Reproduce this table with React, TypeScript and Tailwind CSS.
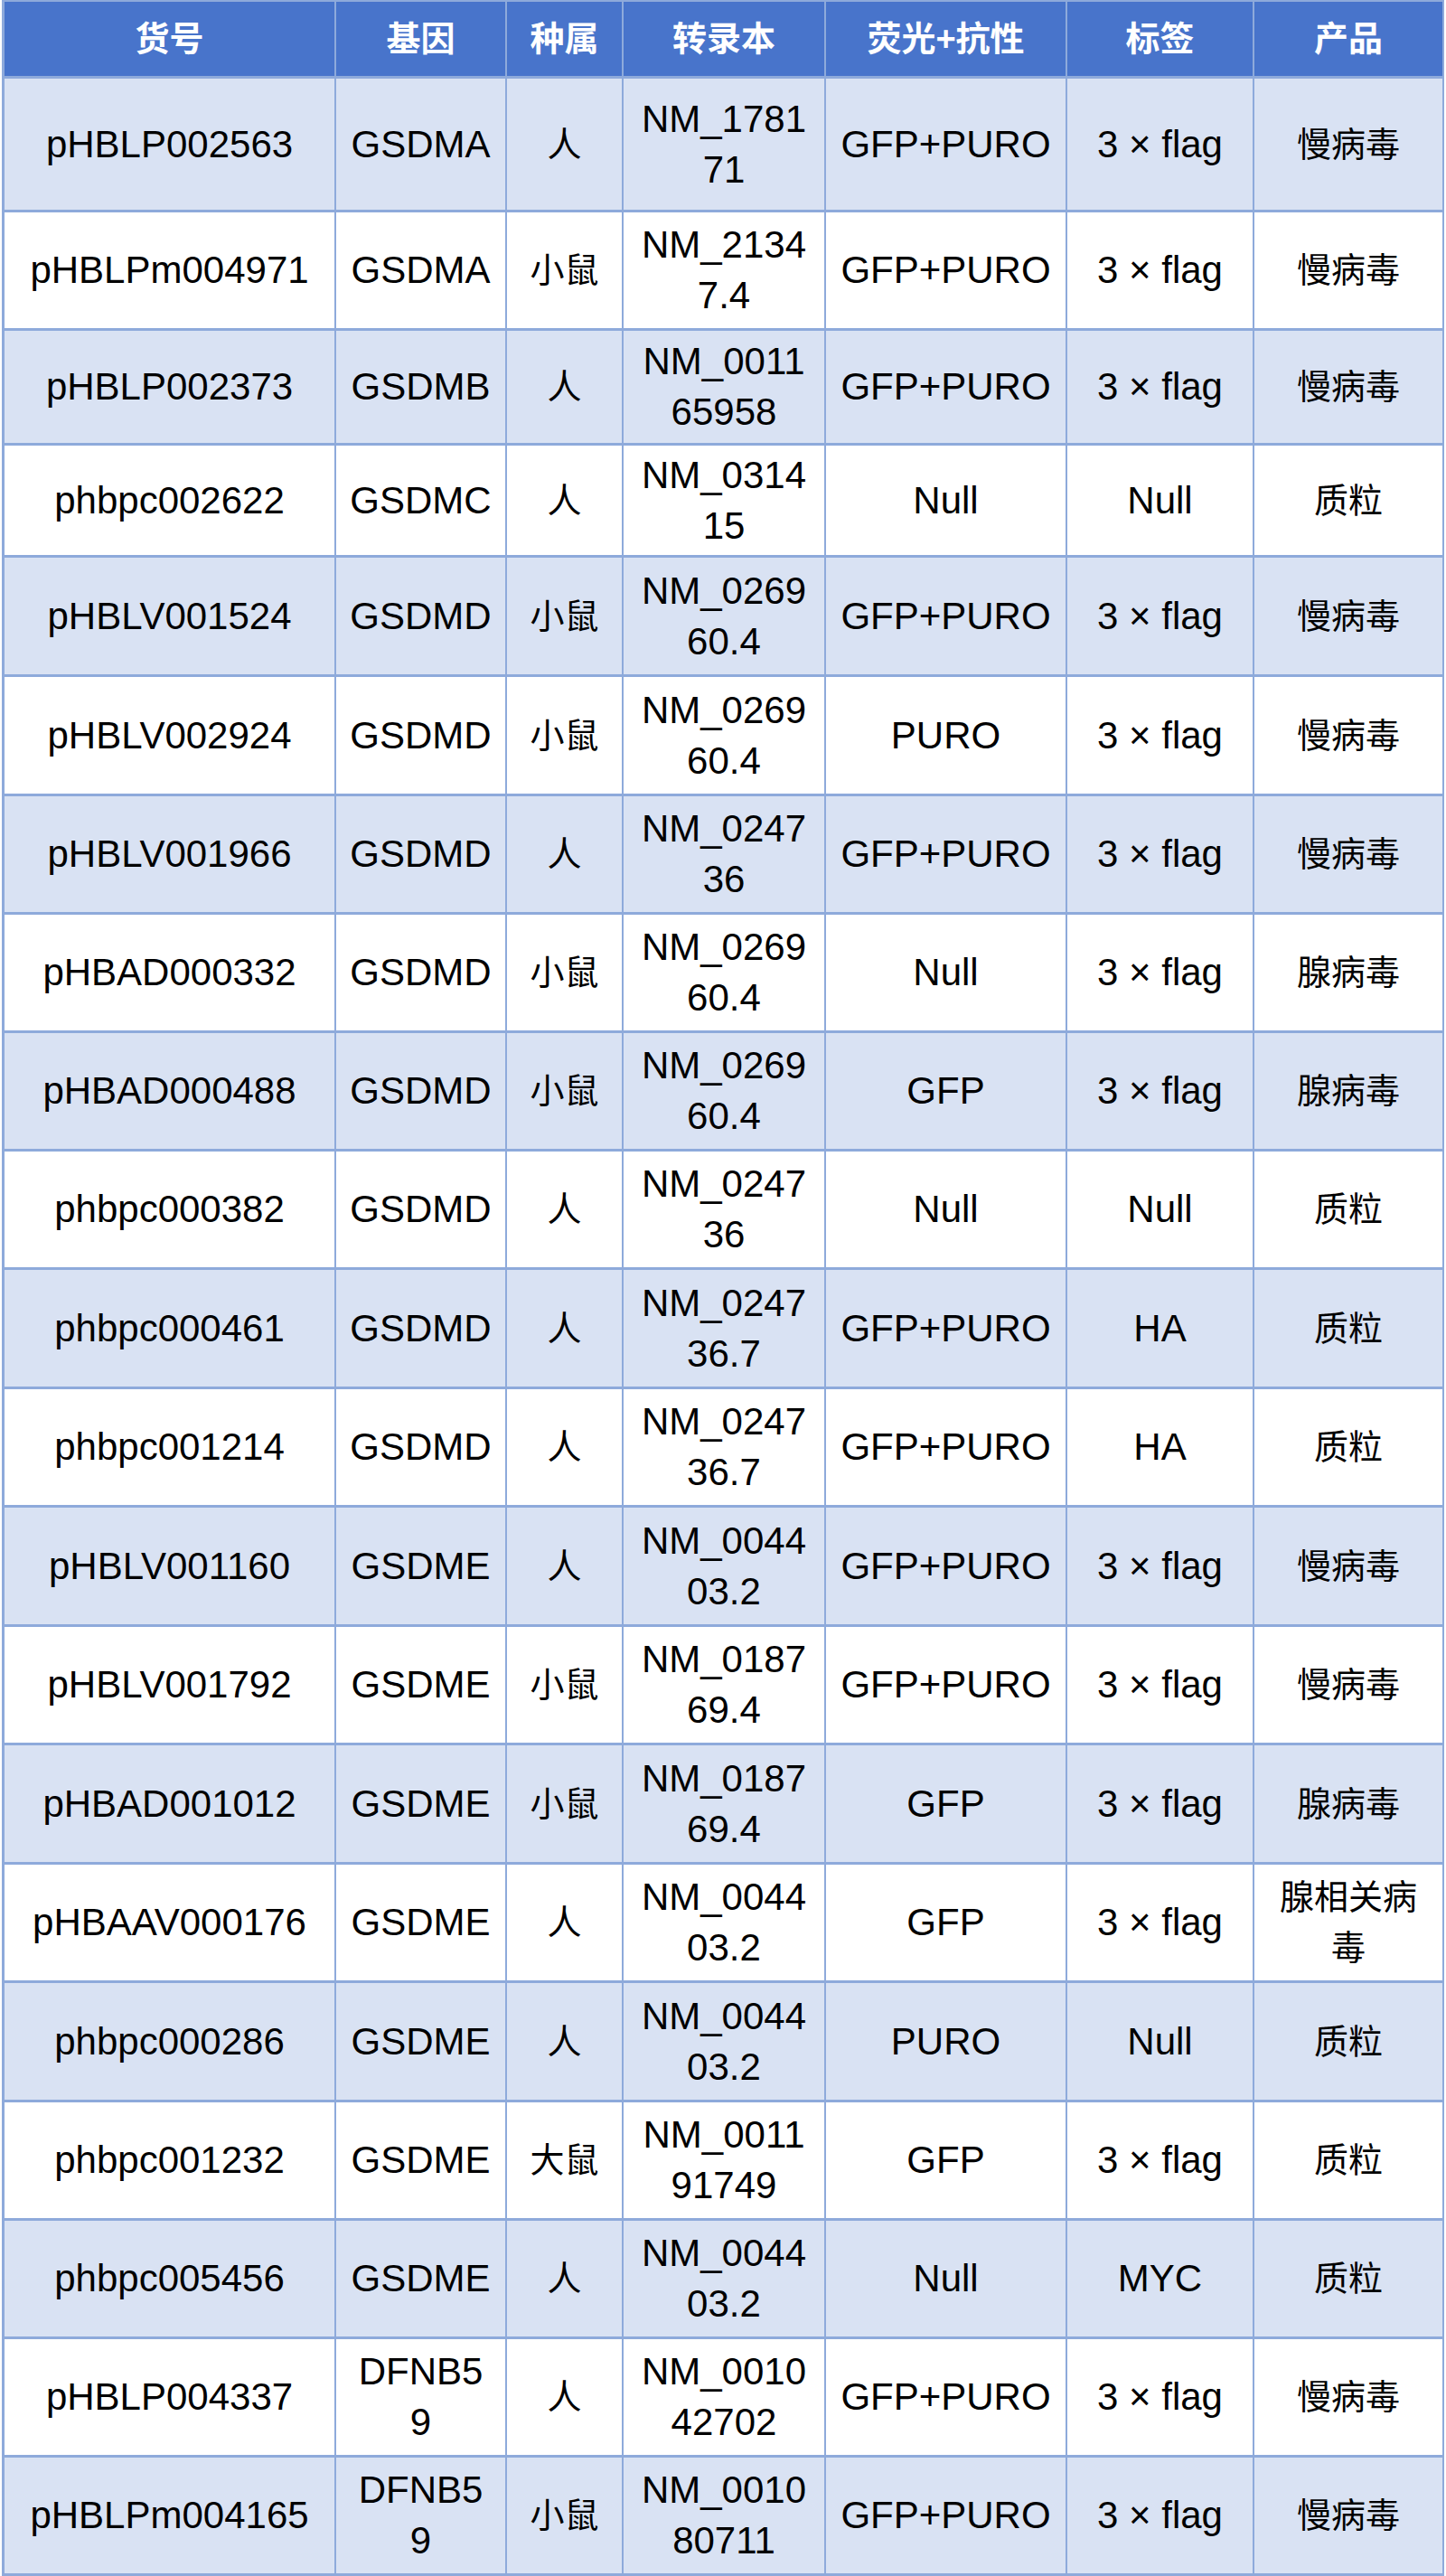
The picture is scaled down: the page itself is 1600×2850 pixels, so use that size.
import React from "react";

type Row = {
  sku: string;
  gene: string;
  species: string;
  transcript: string;
  marker: string;
  tag: string;
  product: string;
};

const headers = ["货号", "基因", "种属", "转录本", "荧光+抗性", "标签", "产品"];

const colWidths = [
  "w-[367px]",
  "w-[189px]",
  "w-[129px]",
  "w-[224px]",
  "w-[267px]",
  "w-[207px]",
  "w-[210px]",
];

// row heights read off the screenshot, first rows are a bit uneven
const rowHeights = [
  "h-[148px]",
  "h-[131px]",
  "h-[127px]",
  "h-[124px]",
  "h-[132px]",
  "h-[132px]",
  "h-[131px]",
  "h-[131px]",
  "h-[131px]",
  "h-[131px]",
  "h-[132px]",
  "h-[131px]",
  "h-[132px]",
  "h-[131px]",
  "h-[132px]",
  "h-[131px]",
  "h-[132px]",
  "h-[131px]",
  "h-[131px]",
  "h-[131px]",
  "h-[131px]",
];

const rows: Row[] = [
  { sku: "pHBLP002563", gene: "GSDMA", species: "人", transcript: "NM_1781\n71", marker: "GFP+PURO", tag: "3 × flag", product: "慢病毒" },
  { sku: "pHBLPm004971", gene: "GSDMA", species: "小鼠", transcript: "NM_2134\n7.4", marker: "GFP+PURO", tag: "3 × flag", product: "慢病毒" },
  { sku: "pHBLP002373", gene: "GSDMB", species: "人", transcript: "NM_0011\n65958", marker: "GFP+PURO", tag: "3 × flag", product: "慢病毒" },
  { sku: "phbpc002622", gene: "GSDMC", species: "人", transcript: "NM_0314\n15", marker: "Null", tag: "Null", product: "质粒" },
  { sku: "pHBLV001524", gene: "GSDMD", species: "小鼠", transcript: "NM_0269\n60.4", marker: "GFP+PURO", tag: "3 × flag", product: "慢病毒" },
  { sku: "pHBLV002924", gene: "GSDMD", species: "小鼠", transcript: "NM_0269\n60.4", marker: "PURO", tag: "3 × flag", product: "慢病毒" },
  { sku: "pHBLV001966", gene: "GSDMD", species: "人", transcript: "NM_0247\n36", marker: "GFP+PURO", tag: "3 × flag", product: "慢病毒" },
  { sku: "pHBAD000332", gene: "GSDMD", species: "小鼠", transcript: "NM_0269\n60.4", marker: "Null", tag: "3 × flag", product: "腺病毒" },
  { sku: "pHBAD000488", gene: "GSDMD", species: "小鼠", transcript: "NM_0269\n60.4", marker: "GFP", tag: "3 × flag", product: "腺病毒" },
  { sku: "phbpc000382", gene: "GSDMD", species: "人", transcript: "NM_0247\n36", marker: "Null", tag: "Null", product: "质粒" },
  { sku: "phbpc000461", gene: "GSDMD", species: "人", transcript: "NM_0247\n36.7", marker: "GFP+PURO", tag: "HA", product: "质粒" },
  { sku: "phbpc001214", gene: "GSDMD", species: "人", transcript: "NM_0247\n36.7", marker: "GFP+PURO", tag: "HA", product: "质粒" },
  { sku: "pHBLV001160", gene: "GSDME", species: "人", transcript: "NM_0044\n03.2", marker: "GFP+PURO", tag: "3 × flag", product: "慢病毒" },
  { sku: "pHBLV001792", gene: "GSDME", species: "小鼠", transcript: "NM_0187\n69.4", marker: "GFP+PURO", tag: "3 × flag", product: "慢病毒" },
  { sku: "pHBAD001012", gene: "GSDME", species: "小鼠", transcript: "NM_0187\n69.4", marker: "GFP", tag: "3 × flag", product: "腺病毒" },
  { sku: "pHBAAV000176", gene: "GSDME", species: "人", transcript: "NM_0044\n03.2", marker: "GFP", tag: "3 × flag", product: "腺相关病\n毒" },
  { sku: "phbpc000286", gene: "GSDME", species: "人", transcript: "NM_0044\n03.2", marker: "PURO", tag: "Null", product: "质粒" },
  { sku: "phbpc001232", gene: "GSDME", species: "大鼠", transcript: "NM_0011\n91749", marker: "GFP", tag: "3 × flag", product: "质粒" },
  { sku: "phbpc005456", gene: "GSDME", species: "人", transcript: "NM_0044\n03.2", marker: "Null", tag: "MYC", product: "质粒" },
  { sku: "pHBLP004337", gene: "DFNB5\n9", species: "人", transcript: "NM_0010\n42702", marker: "GFP+PURO", tag: "3 × flag", product: "慢病毒" },
  { sku: "pHBLPm004165", gene: "DFNB5\n9", species: "小鼠", transcript: "NM_0010\n80711", marker: "GFP+PURO", tag: "3 × flag", product: "慢病毒" },
];

const hasCjk = (s: string) => /[\u4e00-\u9fff]/.test(s);

function Cell({ children, width, height, className = "" }: { children: string; width: string; height: string; className?: string }) {
  // chinese glyphs in the source render a bit smaller than the latin ones
  const size = hasCjk(children) ? "text-[38px]" : "text-[42px]";
  return (
    <div
      className={`${width} ${height} ${size} flex shrink-0 items-center justify-center whitespace-pre-line border-r-2 border-b-[3px] border-[#8eaadb] px-3 text-center leading-[56px] ${className}`}
    >
      {children}
    </div>
  );
}

export default function App() {
  return (
    <div className="min-h-[2850px] w-[1600px] bg-white font-['Liberation_Sans','Noto_Sans_CJK_SC',sans-serif] text-black">
      <div className="ml-[2px] inline-flex flex-col border-t-2 border-l-[3px] border-[#8eaadb]">
        <div className="flex bg-[#4874cb]">
          {headers.map((h, i) => (
            <Cell key={h} width={colWidths[i]} height="h-[85px]" className="font-bold text-white">
              {h}
            </Cell>
          ))}
        </div>
        {rows.map((r, idx) => {
          const bg = idx % 2 === 0 ? "bg-[#d9e2f3]" : "bg-white";
          const h = rowHeights[idx];
          const values = [r.sku, r.gene, r.species, r.transcript, r.marker, r.tag, r.product];
          return (
            <div key={r.sku} className={`flex ${bg}`}>
              {values.map((v, i) => (
                <Cell key={i} width={colWidths[i]} height={h}>
                  {v}
                </Cell>
              ))}
            </div>
          );
        })}
      </div>
    </div>
  );
}
